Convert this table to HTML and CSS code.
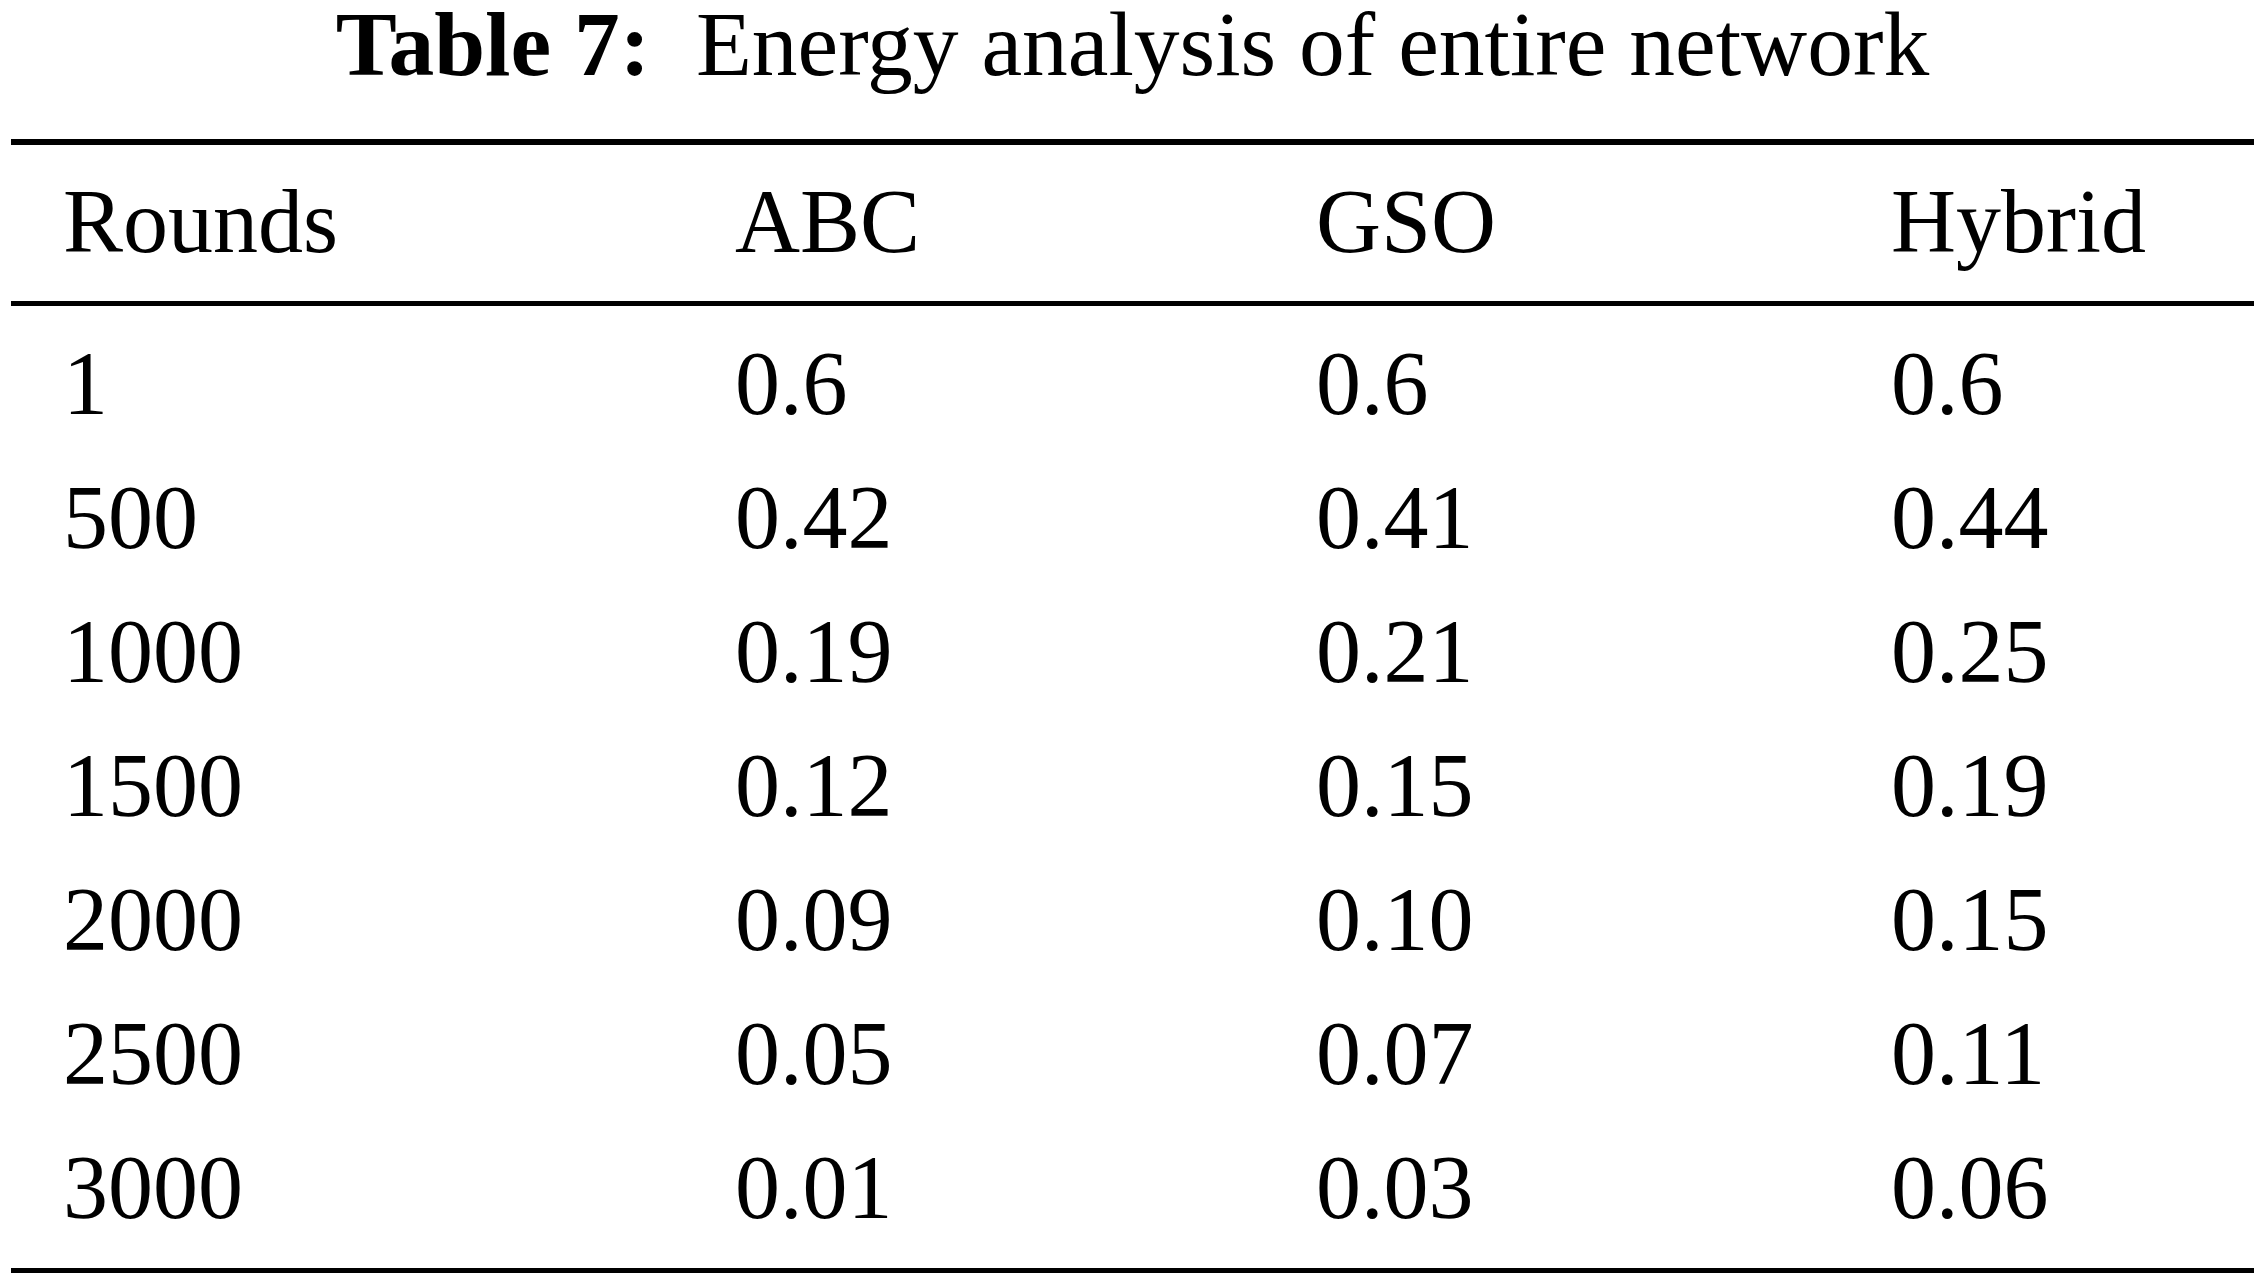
FILE: index.html
```html
<!DOCTYPE html>
<html>
<head>
<meta charset="utf-8">
<link rel="stylesheet" href="styles.css">
</head>
<body>
<div class="page">
  <h1 class="caption"><span class="label">Table 7:</span>&nbsp; Energy analysis of entire network</h1>
  <div class="table">
    <div class="row head">
      <div class="cell">Rounds</div><div class="cell">ABC</div><div class="cell">GSO</div><div class="cell">Hybrid</div>
    </div>
    <div class="body">
      <div class="row"><div class="cell">1</div><div class="cell">0.6</div><div class="cell">0.6</div><div class="cell">0.6</div></div>
      <div class="row"><div class="cell">500</div><div class="cell">0.42</div><div class="cell">0.41</div><div class="cell">0.44</div></div>
      <div class="row"><div class="cell">1000</div><div class="cell">0.19</div><div class="cell">0.21</div><div class="cell">0.25</div></div>
      <div class="row"><div class="cell">1500</div><div class="cell">0.12</div><div class="cell">0.15</div><div class="cell">0.19</div></div>
      <div class="row"><div class="cell">2000</div><div class="cell">0.09</div><div class="cell">0.10</div><div class="cell">0.15</div></div>
      <div class="row"><div class="cell">2500</div><div class="cell">0.05</div><div class="cell">0.07</div><div class="cell">0.11</div></div>
      <div class="row"><div class="cell">3000</div><div class="cell">0.01</div><div class="cell">0.03</div><div class="cell">0.06</div></div>
    </div>
  </div>
</div>
</body>
</html>
```
FILE: styles.css
```css
html, body {
  margin: 0;
  padding: 0;
  background: #fff;
}
.page {
  width: 2265px;
  height: 1282px;
  font-family: "Liberation Serif", "Times New Roman", serif;
  color: #000;
  overflow: hidden;
}
.caption {
  margin: 0;
  font-size: 91.5px;
  font-weight: normal;
  line-height: 88px;
  text-align: center;
  white-space: nowrap;
}
.label {
  font-weight: bold;
}
.table {
  margin: 51px 11px 0 11px;
  border-top: 6px solid #000;
  border-bottom: 5px solid #000;
  font-size: 90px;
}
.row {
  display: grid;
  grid-template-columns: 672px 581px 575px 1fr;
  line-height: 134px;
}
.head {
  line-height: 154px;
  padding-bottom: 2px;
  border-bottom: 5px solid #000;
}
.body {
  padding-top: 11px;
  padding-bottom: 13px;
}
.cell {
  padding-left: 52px;
  white-space: nowrap;
}
```
